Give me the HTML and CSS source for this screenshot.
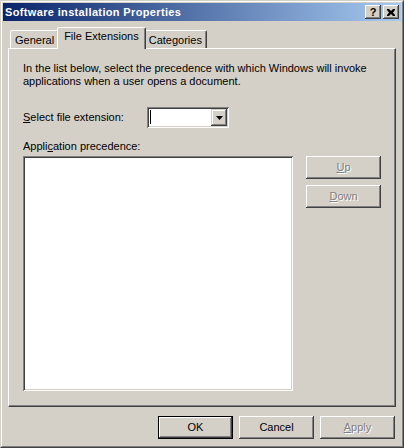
FILE: index.html
```html
<!DOCTYPE html>
<html>
<head>
<meta charset="utf-8">
<link rel="stylesheet" href="styles.css">
</head>
<body>
<div class="window">
  <div class="frame">
    <div class="titlebar">
      <span class="title">Software installation Properties</span>
      <div class="caption-btns">
        <div class="cbtn"><span class="q">?</span></div>
        <div class="cbtn cclose">
          <svg width="8" height="7" viewBox="0 0 8 7"><path d="M0 0h2l2 2 2-2h2v1l-2 2.5 2 2.5v1h-2l-2-2-2 2h-2v-1l2-2.5-2-2.5z" fill="#000"/></svg>
        </div>
      </div>
    </div>
    <div class="client">
      <div class="tabs">
        <div class="tab first">General</div>
        <div class="tab selected">File Extensions</div>
        <div class="tab">Categories</div>
      </div>
      <div class="panel">
        <p class="intro">In the list below, select the precedence with which Windows will invoke applications when a user opens a document.</p>
        <div class="ext-row">
          <span class="label"><u>S</u>elect file extension:</span>
          <div class="combo">
            <div class="combo-field"><span class="caret"></span></div>
            <div class="combo-btn">
              <svg width="7" height="4" viewBox="0 0 7 4"><path d="M0 0h7l-3.5 4z" fill="#000"/></svg>
            </div>
          </div>
        </div>
        <div class="label prec">Appli<u>c</u>ation precedence:</div>
        <div class="list-row">
          <div class="listbox"></div>
          <div class="side-btns">
            <div class="btn disabled"><u>U</u>p</div>
            <div class="btn disabled"><u>D</u>own</div>
          </div>
        </div>
      </div>
      <div class="footer">
        <div class="btn default">OK</div>
        <div class="btn">Cancel</div>
        <div class="btn disabled"><u>A</u>pply</div>
      </div>
    </div>
  </div>
</div>
</body>
</html>
```
FILE: styles.css
```css
html, body {
  margin: 0;
  padding: 0;
  background: #D4D0C8;
}
body {
  font-family: Tahoma, "Liberation Sans", Arial, sans-serif;
  font-size: 11px;
  color: #000;
}
.window {
  width: 404px;
  height: 448px;
  box-sizing: border-box;
  border: 1px solid;
  border-color: #D4D0C8 #404040 #404040 #D4D0C8;
  background: #D4D0C8;
}
.frame {
  height: 100%;
  box-sizing: border-box;
  border: 1px solid;
  border-color: #FFFFFF #808080 #808080 #FFFFFF;
  padding: 1px;
  display: flex;
  flex-direction: column;
}
.titlebar {
  height: 18px;
  flex: none;
  background: linear-gradient(to right, #0A246A, #A6CAF0);
  display: flex;
  align-items: center;
  justify-content: space-between;
  padding: 0 2px 0 2px;
}
.title {
  color: #fff;
  font-weight: bold;
  font-size: 11px;
  letter-spacing: 0.35px;
}
.caption-btns {
  display: flex;
  gap: 2px;
}
.cbtn {
  width: 16px;
  height: 14px;
  box-sizing: border-box;
  background: #D4D0C8;
  box-shadow: inset -1px -1px #404040, inset 1px 1px #FFFFFF, inset -2px -2px #808080;
  display: flex;
  align-items: center;
  justify-content: center;
}
.q {
  font-weight: bold;
  font-size: 11px;
  line-height: 11px;
  margin-top: 1px;
}
.client {
  flex: 1;
  display: flex;
  flex-direction: column;
  padding: 6px 5px 0 5px;
}
.tabs {
  display: flex;
  align-items: flex-end;
  height: 21px;
  padding-left: 2px;
  position: relative;
  z-index: 1;
}
.tab {
  height: 18px;
  box-sizing: border-box;
  padding: 3px 4px 0 4px;
  border: 1px solid;
  border-bottom: none;
  border-color: #FFFFFF #404040 transparent #FFFFFF;
  border-radius: 2px 2px 0 0;
  box-shadow: inset -1px 0 #808080;
  background: #D4D0C8;
}
.tab.selected {
  height: 22px;
  margin: 0 -2px -1px -2px;
  padding: 2px 6px 0 6px;
  position: relative;
  z-index: 2;
}
.panel {
  height: 359px;
  box-sizing: border-box;
  border: 1px solid;
  border-color: #FFFFFF #404040 #404040 #FFFFFF;
  box-shadow: inset -1px -1px #808080;
  padding: 13px 14px 0 14px;
  display: flex;
  flex-direction: column;
}
.intro {
  margin: 0;
  line-height: 13px;
  width: 360px;
}
.ext-row {
  margin-top: 19px;
  display: flex;
  align-items: center;
}
.label {
  line-height: 13px;
}
.ext-row .label {
  width: 124px;
}
.combo {
  width: 82px;
  height: 21px;
  box-sizing: border-box;
  background: #fff;
  box-shadow: inset 1px 1px #808080, inset -1px -1px #FFFFFF, inset 2px 2px #404040, inset -2px -2px #D4D0C8;
  padding: 2px;
  display: flex;
}
.combo-field {
  flex: 1;
  position: relative;
}
.caret {
  position: absolute;
  left: 1px;
  top: 1px;
  width: 1px;
  height: 14px;
  background: #000;
}
.combo-btn {
  width: 16px;
  height: 17px;
  box-sizing: border-box;
  background: #D4D0C8;
  box-shadow: inset -1px -1px #404040, inset 1px 1px #D4D0C8, inset -2px -2px #808080, inset 2px 2px #FFFFFF;
  display: flex;
  align-items: center;
  justify-content: center;
}
.prec {
  margin-top: 12px;
}
.list-row {
  margin-top: 3px;
  display: flex;
  gap: 13px;
}
.listbox {
  width: 270px;
  height: 235px;
  box-sizing: border-box;
  background: #fff;
  box-shadow: inset 1px 1px #808080, inset -1px -1px #FFFFFF, inset 2px 2px #404040, inset -2px -2px #D4D0C8;
}
.side-btns {
  display: flex;
  flex-direction: column;
  gap: 6px;
}
.btn {
  width: 75px;
  height: 23px;
  box-sizing: border-box;
  background: #D4D0C8;
  box-shadow: inset -1px -1px #404040, inset 1px 1px #FFFFFF, inset -2px -2px #808080;
  display: flex;
  align-items: center;
  justify-content: center;
  line-height: 13px;
}
.btn.disabled {
  color: #808080;
  text-shadow: 1px 1px #FFFFFF;
}
.btn.default {
  border: 1px solid #000;
  box-shadow: inset -1px -1px #404040, inset 1px 1px #FFFFFF, inset -2px -2px #808080;
}
.footer {
  display: flex;
  justify-content: flex-end;
  gap: 6px;
  margin-top: 9px;
  padding-right: 1px;
}
u {
  text-decoration: underline;
  text-underline-offset: 1px;
}
```
